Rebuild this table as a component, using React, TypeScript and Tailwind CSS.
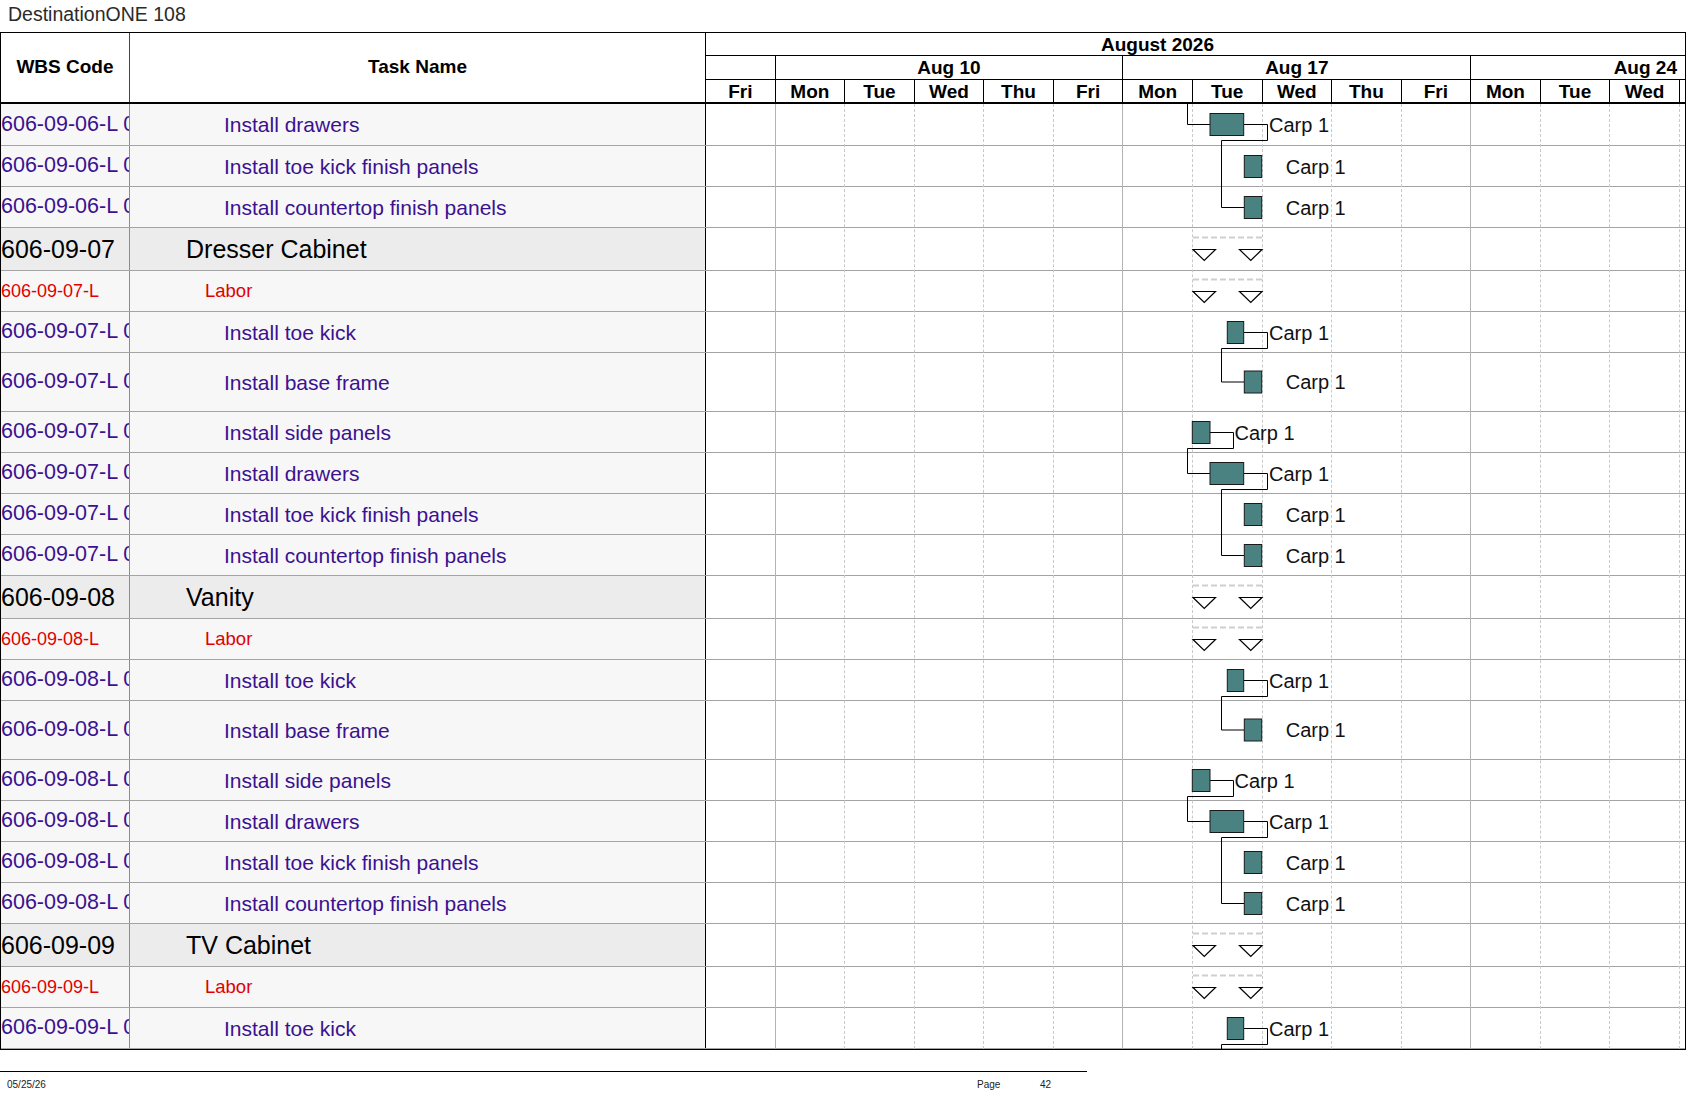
import React from "react";

const FONT = "font-['Liberation_Sans',Arial,sans-serif]";
const BAR_FILL = "#4a8282";

type Kind = "task" | "labor" | "group";
type Row = { wbs: string; task: string; kind: Kind; h: string };

const rows: Row[] = [
  { wbs: "606-09-06-L 012", task: "Install drawers", kind: "task", h: "h-[42px]" },
  { wbs: "606-09-06-L 013", task: "Install toe kick finish panels", kind: "task", h: "h-[41px]" },
  { wbs: "606-09-06-L 014", task: "Install countertop finish panels", kind: "task", h: "h-[41px]" },
  { wbs: "606-09-07", task: "Dresser Cabinet", kind: "group", h: "h-[43px]" },
  { wbs: "606-09-07-L", task: "Labor", kind: "labor", h: "h-[41px]" },
  { wbs: "606-09-07-L 001", task: "Install toe kick", kind: "task", h: "h-[41px]" },
  { wbs: "606-09-07-L 002", task: "Install base frame", kind: "task", h: "h-[59px]" },
  { wbs: "606-09-07-L 003", task: "Install side panels", kind: "task", h: "h-[41px]" },
  { wbs: "606-09-07-L 004", task: "Install drawers", kind: "task", h: "h-[41px]" },
  { wbs: "606-09-07-L 005", task: "Install toe kick finish panels", kind: "task", h: "h-[41px]" },
  { wbs: "606-09-07-L 006", task: "Install countertop finish panels", kind: "task", h: "h-[41px]" },
  { wbs: "606-09-08", task: "Vanity", kind: "group", h: "h-[43px]" },
  { wbs: "606-09-08-L", task: "Labor", kind: "labor", h: "h-[41px]" },
  { wbs: "606-09-08-L 001", task: "Install toe kick", kind: "task", h: "h-[41px]" },
  { wbs: "606-09-08-L 002", task: "Install base frame", kind: "task", h: "h-[59px]" },
  { wbs: "606-09-08-L 003", task: "Install side panels", kind: "task", h: "h-[41px]" },
  { wbs: "606-09-08-L 004", task: "Install drawers", kind: "task", h: "h-[41px]" },
  { wbs: "606-09-08-L 005", task: "Install toe kick finish panels", kind: "task", h: "h-[41px]" },
  { wbs: "606-09-08-L 006", task: "Install countertop finish panels", kind: "task", h: "h-[41px]" },
  { wbs: "606-09-09", task: "TV Cabinet", kind: "group", h: "h-[43px]" },
  { wbs: "606-09-09-L", task: "Labor", kind: "labor", h: "h-[41px]" },
  { wbs: "606-09-09-L 001", task: "Install toe kick", kind: "task", h: "h-[41px]" },
];

const days = ["Fri", "Mon", "Tue", "Wed", "Thu", "Fri", "Mon", "Tue", "Wed", "Thu", "Fri", "Mon", "Tue", "Wed"];

function TableRow({ row }: { row: Row }) {
  const bg = row.kind === "group" ? "bg-[#ececec]" : "bg-[#f7f7f7]";
  let wbsCls = "text-[21.5px] text-[#3b1190]";
  let taskCls = "pl-[94px] text-[21px] text-[#3b1190]";
  if (row.kind === "labor") {
    wbsCls = "text-[18px] text-[#e00000]";
    taskCls = "pl-[75px] text-[18.5px] text-[#e00000]";
  }
  if (row.kind === "group") {
    wbsCls = "text-[25px] text-black";
    taskCls = "pl-[56px] text-[25px] text-black";
  }
  return (
    <div className={`flex ${row.h} border-b border-[#a4a4a4] last:border-b-0`}>
      <div className={`w-[129px] shrink-0 flex items-center overflow-hidden whitespace-nowrap border-r border-[#8c8c8c] ${bg}`}>
        <span className={`leading-none ${wbsCls}`}>{row.wbs}</span>
      </div>
      <div className={`w-[576px] shrink-0 flex items-center whitespace-nowrap border-r border-black ${bg}`}>
        <span className={`leading-none ${taskCls}`}>{row.task}</span>
      </div>
      <div className="flex-1 bg-white" />
    </div>
  );
}

function Bar({ x1, x2, cy }: { x1: number; x2: number; cy: number }) {
  return <rect x={x1} y={cy - 11} width={x2 - x1} height={22} fill={BAR_FILL} stroke="#1a1a1a" strokeWidth={1} />;
}

function Label({ x, cy }: { x: number; cy: number }) {
  return (
    <text x={x} y={cy} dominantBaseline="central" fontSize={20} fontFamily="'Liberation Sans', Arial, sans-serif" fill="#111">
      Carp 1
    </text>
  );
}

function Link({ d }: { d: string }) {
  return <path d={d} fill="none" stroke="#000" strokeWidth={1} />;
}

function Milestones({ top }: { top: number }) {
  const tri = (x: number) => `${x},${top + 12} ${x + 22.5},${top + 12} ${x + 11.25},${top + 23}`;
  return (
    <g>
      <line x1={1193} y1={top} x2={1262} y2={top} stroke="#cfcfcf" strokeWidth={2} strokeDasharray="6 3" />
      <polygon points={tri(1193)} fill="#fff" stroke="#000" strokeWidth={1.2} />
      <polygon points={tri(1239.5)} fill="#fff" stroke="#000" strokeWidth={1.2} />
    </g>
  );
}

// a cabinet block: group, labor and six carpentry tasks
function Section({ g }: { g: number }) {
  const toe = g + 84 + 20.5;
  const frame = g + 125 + 29;
  const side = g + 184 + 20.5;
  const drawers = g + 225 + 20.5;
  const finish = g + 266 + 20.5;
  const counter = g + 307 + 20.5;
  return (
    <g>
      <Milestones top={g + 9.5} />
      <Milestones top={g + 43 + 8.5} />
      <Link d={`M1243.7 ${toe}H1267.5V${g + 84 + 36.5}H1221.5V${frame}H1244.3`} />
      <Bar x1={1227.3} x2={1243.7} cy={toe} />
      <Label x={1269} cy={toe} />
      <Bar x1={1244.3} x2={1261.7} cy={frame} />
      <Label x={1285.7} cy={frame} />
      <Link d={`M1210 ${side}H1233.5V${g + 184 + 36.5}H1187.5V${drawers}H1210`} />
      <Bar x1={1192.3} x2={1210} cy={side} />
      <Label x={1234.5} cy={side} />
      <Link d={`M1243.7 ${drawers}H1267.5V${g + 225 + 36.5}H1221.5V${counter}H1244.3`} />
      <Bar x1={1210} x2={1243.7} cy={drawers} />
      <Label x={1269} cy={drawers} />
      <Bar x1={1244.3} x2={1261.7} cy={finish} />
      <Label x={1285.7} cy={finish} />
      <Bar x1={1244.3} x2={1261.7} cy={counter} />
      <Label x={1285.7} cy={counter} />
    </g>
  );
}

function GanttDrawing() {
  return (
    <svg className="absolute top-0 left-[705px] w-[979px] h-[945px] pointer-events-none" viewBox="706 104 979 945">
      {/* tail of the previous cabinet */}
      <Link d="M1187.5 104V124.5H1210" />
      <Link d="M1243.7 124.5H1267.5V140.5H1221.5V207.5H1244.3" />
      <Bar x1={1210} x2={1243.7} cy={124.5} />
      <Label x={1269} cy={124.5} />
      <Bar x1={1244.3} x2={1261.7} cy={166.5} />
      <Label x={1285.7} cy={166.5} />
      <Bar x1={1244.3} x2={1261.7} cy={207.5} />
      <Label x={1285.7} cy={207.5} />

      <Section g={228} />
      <Section g={576} />

      {/* TV Cabinet */}
      <Milestones top={924 + 9.5} />
      <Milestones top={967 + 8.5} />
      <Link d="M1243.7 1028.5H1267.5V1044.5H1221.5V1052" />
      <Bar x1={1227.3} x2={1243.7} cy={1028.5} />
      <Label x={1269} cy={1028.5} />
    </svg>
  );
}

function GridLines() {
  return (
    <div className="absolute top-0 bottom-0 left-[705px] w-[979px] flex pointer-events-none">
      <div className="w-[69.57px] shrink-0 border-r border-[#b4b4b4]" />
      <div className="w-[69.57px] shrink-0 border-r border-dashed border-[#c8c8c8]" />
      <div className="w-[69.57px] shrink-0 border-r border-dashed border-[#c8c8c8]" />
      <div className="w-[69.57px] shrink-0 border-r border-dashed border-[#c8c8c8]" />
      <div className="w-[69.57px] shrink-0 border-r border-dashed border-[#c8c8c8]" />
      <div className="w-[69.57px] shrink-0 border-r border-[#b4b4b4]" />
      <div className="w-[69.57px] shrink-0 border-r border-dashed border-[#c8c8c8]" />
      <div className="w-[69.57px] shrink-0 border-r border-dashed border-[#c8c8c8]" />
      <div className="w-[69.57px] shrink-0 border-r border-dashed border-[#c8c8c8]" />
      <div className="w-[69.57px] shrink-0 border-r border-dashed border-[#c8c8c8]" />
      <div className="w-[69.57px] shrink-0 border-r border-[#b4b4b4]" />
      <div className="w-[69.57px] shrink-0 border-r border-dashed border-[#c8c8c8]" />
      <div className="w-[69.57px] shrink-0 border-r border-dashed border-[#c8c8c8]" />
      <div className="w-[69.57px] shrink-0 border-r border-dashed border-[#c8c8c8]" />
    </div>
  );
}

export default function App() {
  return (
    <div className={`w-[1687px] h-[1097px] bg-white text-black ${FONT}`}>
      <div className="h-[32px] flex items-center pl-[8px] pb-[3px]">
        <span className="text-[19.5px] leading-none text-[#2a2a2a]">DestinationONE 108</span>
      </div>

      <div className="w-[1686px] border border-black">
        {/* header */}
        <div className="flex border-b-2 border-black">
          <div className="w-[129px] shrink-0 flex items-center justify-center border-r border-[#444] text-[19px] font-bold">
            WBS Code
          </div>
          <div className="w-[576px] shrink-0 flex items-center justify-center border-r border-black text-[19px] font-bold">
            Task Name
          </div>
          <div className="flex-1 flex flex-col text-[19px] font-bold leading-none">
            <div className="h-[23px] border-b border-black flex">
              <div className="w-[903px] flex items-center justify-center">August 2026</div>
            </div>
            <div className="h-[24px] border-b border-black flex">
              <div className="w-[69.57px] shrink-0 border-r border-black" />
              <div className="w-[347.85px] shrink-0 border-r border-black flex items-center justify-center">Aug 10</div>
              <div className="w-[347.85px] shrink-0 border-r border-black flex items-center justify-center">Aug 17</div>
              <div className="flex-1 flex items-center justify-end pr-[8px]">Aug 24</div>
            </div>
            <div className="h-[22px] flex">
              {days.map((d, i) => (
                <div key={i} className="w-[69.57px] shrink-0 border-r border-black flex items-center justify-center">
                  {d}
                </div>
              ))}
              <div className="flex-1" />
            </div>
          </div>
        </div>

        {/* body */}
        <div className="relative">
          {rows.map((r, i) => (
            <TableRow key={i} row={r} />
          ))}
          <GridLines />
          <GanttDrawing />
        </div>
      </div>

      {/* footer */}
      <div className="mt-[21px] w-[1087px] border-t border-black flex pt-[7px] text-[10px] leading-[12px] text-[#222]">
        <span className="flex-1 pl-[7px]">05/25/26</span>
        <span className="w-[63px]">Page</span>
        <span className="w-[47px]">42</span>
      </div>
    </div>
  );
}
